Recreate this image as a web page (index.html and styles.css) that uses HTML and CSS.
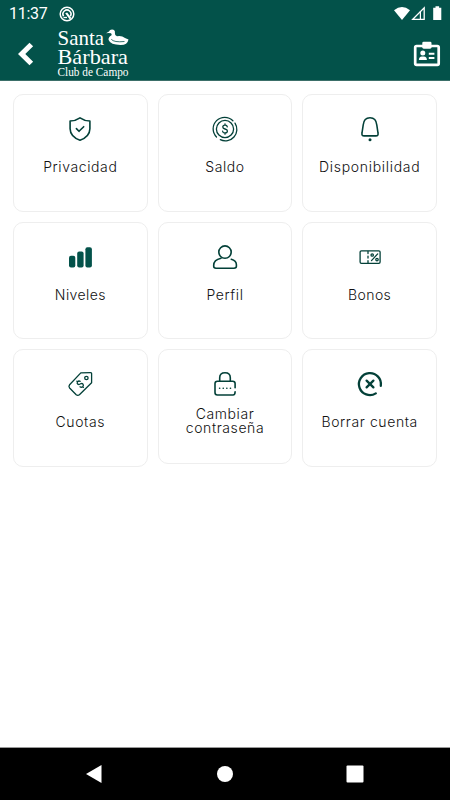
FILE: index.html
```html
<!DOCTYPE html>
<html lang="es">
<head>
  <meta charset="UTF-8" />
  <meta name="viewport" content="width=device-width, initial-scale=1" />
  <title>Santa Bárbara Club de Campo</title>
  <link rel="stylesheet" href="styles.css">
</head>
<body>
  <header>
    <div class="status-bar">
      <span class="clock">11:37</span>
      <svg class="status-app" width="16" height="16" viewBox="0 0 16 16">
        <circle cx="8" cy="8" r="6.8" fill="none" stroke="#fff" stroke-width="1.5" />
        <path d="M4.6 10.2A4 4 0 1 1 11.3 10.2" fill="none" stroke="#fff" stroke-width="1.6" />
        <path d="M6.2 7.2L8.2 6.5L12.5 12.2L10.6 13.2Z" fill="#fff" />
        <path d="M4.5 11.5h3.5" stroke="#fff" stroke-width="1.3" />
      </svg>
      <svg class="status-icons" width="50" height="16" viewBox="0 0 50 16">
        <path d="M0 4.2Q8 -2.2 16 4.2L8 14Z" fill="#fff" />
        <path d="M18.8 13.3L30.2 1.8V13.3Z" fill="none" stroke="#fff" stroke-width="1.3" />
        <path d="M26.4 5.3V13" stroke="#fff" stroke-width="1.2" />
        <path d="M39.2 1.8h2.3V.3h3.6v1.5h2.2V14h-8.1Z" fill="#fff" />
      </svg>
    </div>

    <div class="nav-bar">
      <svg class="back" width="16" height="24" viewBox="0 0 16 24">
        <path d="M13.3 2.5L3.7 12L13.3 21.5" fill="none" stroke="#fff" stroke-width="5.2" />
      </svg>
      <svg class="logo" width="74" height="52" viewBox="0 0 74 52">
        <text x="0.5" y="18" font-size="21" textLength="46.5" lengthAdjust="spacingAndGlyphs">Santa</text>
        <text x="0.5" y="37.3" font-size="21.5" textLength="70.5" lengthAdjust="spacingAndGlyphs">Bárbara</text>
        <text x="0.5" y="49" font-size="11.5" textLength="71" lengthAdjust="spacingAndGlyphs">Club de Campo</text>
        <path d="M49 6.2L52 4.6Q52.6 2.4 55 2.4Q58.4 2.6 57.9 6Q57.6 8.6 60 9.3Q64.5 8.3 68 11L71.5 12.4Q70.5 18 63.5 17.9Q53.5 17.9 51.6 13Q51 10.2 54.5 8.2Q55 7.2 54 6.3Q51.5 5.7 49 6.2Z" />
        <path class="wing" d="M54.3 12.3Q57 15.6 67.5 14.5" />
      </svg>
      <svg class="card-icon" width="28" height="26" viewBox="0 0 28 26">
        <rect x="2.2" y="5" width="23.5" height="18.8" rx="1.4" fill="none" stroke="#fff" stroke-width="2.7" />
        <rect x="9.3" y=".7" width="9.2" height="7" rx="1.4" fill="#fff" />
        <circle cx="9.8" cy="11.9" r="2.5" fill="#fff" />
        <path d="M5.9 19q0-3.5 3-3.5h2q3 0 3 3.5Z" fill="#fff" />
        <path d="M15.8 12.7h5.6M15.8 17h5.6" stroke="#fff" stroke-width="2" />
      </svg>
    </div>
  </header>

  <main class="menu">
    <div class="card">
      <svg class="icon" viewBox="0 0 28 28">
        <path d="M14 2.8Q9.3 6 4.1 6V13.8Q4.3 21.8 14 25.3Q23.7 21.8 23.9 13.8V6Q18.7 6 14 2.8Z" />
        <path d="M10.4 13.6L13 16.3L17.7 11.7" />
      </svg>
      <span class="label">Privacidad</span>
    </div>
    <div class="card">
      <svg class="icon fine" viewBox="0 0 28 28">
        <path d="M5.5 22A11.5 11.5 0 0 1 21.9 5.7M24 8.1A11.5 11.5 0 0 1 9.3 24.7" />
        <circle cx="14" cy="14" r="8.6" />
        <path d="M14 8.8V10M14 18V19.2M16.3 11.9Q16.1 10.1 14 10.1Q11.8 10.1 11.8 12Q11.8 13.5 14 14Q16.4 14.5 16.4 16.1Q16.4 18 14 18Q11.8 18 11.6 16.2" />
      </svg>
      <span class="label">Saldo</span>
    </div>
    <div class="card">
      <svg class="icon" viewBox="0 0 28 28">
        <path d="M14 2.8Q20.1 2.8 20.8 10L22 18Q22.6 20.9 19.8 20.9H8.2Q5.4 20.9 6 18L7.2 10Q7.9 2.8 14 2.8Z" />
        <circle class="solid" cx="14" cy="24.8" r="1.5" />
      </svg>
      <span class="label wide">Disponibilidad</span>
    </div>

    <div class="card lower">
      <svg class="icon bars" viewBox="0 0 28 28">
        <rect x="3" y="10.8" width="6.3" height="11.6" rx="2" />
        <rect x="11.2" y="6.6" width="6.4" height="15.8" rx="2" />
        <rect x="19.4" y="2.3" width="6.5" height="20.1" rx="2" />
      </svg>
      <span class="label tight">Niveles</span>
    </div>
    <div class="card lower">
      <svg class="icon" viewBox="0 0 28 28">
        <circle cx="14" cy="7.1" r="6.2" />
        <path d="M10 13.2Q2.7 14.8 2.7 20.3V21.3Q2.7 23.2 5 23.2H23Q25.4 23.2 25.4 21.3V19.7Q25.3 15.4 20.3 14.2" />
      </svg>
      <span class="label">Perfil</span>
    </div>
    <div class="card lower">
      <svg class="icon fine" viewBox="0 0 28 28">
        <rect x="4.1" y="5.8" width="20" height="12.6" rx="1.3" />
        <path d="M12 6.5V18.2" stroke-dasharray="2 2.6" />
        <path d="M21.7 8.9L15.5 15.6" />
        <circle cx="16.2" cy="10" r="1.2" />
        <circle cx="21" cy="14.6" r="1.2" />
      </svg>
      <span class="label tight">Bonos</span>
    </div>

    <div class="card">
      <svg class="icon fine" viewBox="0 0 28 28">
        <path d="M14.8 2.9L24.5 2.7Q25.8 2.7 25.6 4V12.8L13.4 24.8Q11.8 26 10.2 24.8L3.6 18Q2.3 16.3 3.6 14.8Z" />
        <circle cx="20.4" cy="8" r="1.7" />
        <path d="M14.2 11.3Q12.6 10.5 11.5 11.8Q10.6 13.2 11.8 14.2Q13.2 14.9 14.6 13.8Q16 13 17 14.2Q17.9 15.6 16.7 16.7Q15.3 17.8 14 16.8M11.5 11.8L10.8 11.1M16.7 16.7L17.4 17.4" />
      </svg>
      <span class="label">Cuotas</span>
    </div>
    <div class="card two-lines">
      <svg class="icon" viewBox="0 0 28 28">
        <path d="M8.7 11V7.8Q8.7 2.8 14 2.8Q19.3 2.8 19.3 7.8V11" />
        <path d="M24.1 17.8V13.5Q24.1 11.2 21.7 11.2H6.4Q4 11.2 4 13.5V22.5Q4 25 6.4 25H22Q24.1 25 24.1 21.7" />
        <path d="M8.6 18.2h.1M12.2 18.2h.1M15.8 18.2h.1M19.4 18.2h.1" />
      </svg>
      <span class="label">Cambiar<br />contraseña</span>
    </div>
    <div class="card">
      <svg class="icon bold" viewBox="0 0 28 28">
        <path d="M24.8 15.8A11 11 0 1 0 19.8 23.4" />
        <path d="M10.6 10.6L17.4 17.4M17.4 10.6L10.6 17.4" />
      </svg>
      <span class="label">Borrar cuenta</span>
    </div>
  </main>

  <footer>
    <svg width="18" height="20" viewBox="0 0 18 20"><path d="M1 10L16.5 1V19Z" /></svg>
    <svg width="18" height="20" viewBox="0 0 18 20"><circle cx="9" cy="10" r="8" /></svg>
    <svg width="18" height="20" viewBox="0 0 18 20"><rect x=".5" y="1.5" width="17" height="17" rx="1" /></svg>
  </footer>
</body>
</html>
```

FILE: styles.css
```css
* {
  margin: 0;
  padding: 0;
  box-sizing: border-box;
}

body {
  background-color: #ffffff;
  font-family: Inter, "Liberation Sans", sans-serif;
  display: flex;
  flex-direction: column;
  height: 800px;
}

svg {
  display: block;
  flex-shrink: 0;
}

/* Green header: status bar + navigation */
header {
  height: 81px;
  background-color: #03524a;
  border-bottom: 1px solid #3b6f69;
}

.status-bar {
  display: flex;
  align-items: center;
  height: 27px;
  padding: 0 2px 0 9px;
  color: #ffffff;
}

.clock {
  font-family: Roboto, sans-serif;
  font-size: 16px;
  letter-spacing: -0.3px;
  line-height: 28px;
  width: 50px;
  white-space: nowrap;
}

.status-icons {
  margin-left: auto;
  margin-right: 4px;
}

.nav-bar {
  display: flex;
  height: 53px;
  padding: 0 9px 0 18px;
}

.back {
  margin-top: 15px;
}

.logo {
  margin-left: 23px;
  font-family: "Liberation Serif", serif;
  fill: #ffffff;
}

.logo .wing {
  fill: none;
  stroke: #03524a;
  stroke-width: 0.8;
}

.card-icon {
  margin: 14px 0 0 auto;
}

/* Menu grid */
.menu {
  flex: 1;
  display: grid;
  grid-template-columns: repeat(3, 1fr);
  grid-auto-rows: 117.5px;
  gap: 10px;
  align-content: start;
  padding: 13px 13px 0;
}

.card {
  display: flex;
  flex-direction: column;
  align-items: center;
  padding-top: 20px;
  border: 1px solid #eeeeee;
  border-radius: 10px;
}

.two-lines {
  height: 114.5px;
}

.icon {
  width: 28px;
  height: 28px;
  margin-bottom: 17px;
  fill: none;
  stroke: #034038;
  stroke-width: 1.6;
  stroke-linecap: round;
  stroke-linejoin: round;
}

.icon.fine {
  stroke-width: 1.3;
}

.icon.bold {
  stroke-width: 2.3;
}

.icon.bars {
  fill: #03524a;
  stroke: none;
}

.icon .solid {
  fill: #034038;
  stroke: none;
}

.label {
  font-size: 14px;
  font-weight: 300;
  line-height: 14px;
  letter-spacing: 0.6px;
  color: #111111;
  text-align: center;
  white-space: nowrap;
}

.label.tight {
  letter-spacing: 0.4px;
}

.label.wide {
  letter-spacing: 0.7px;
}

/* middle row sits a little lower */
.lower {
  padding-top: 22px;
}

.lower .icon {
  margin-bottom: 15px;
}

.two-lines .icon {
  margin-bottom: 9px;
}

/* Android navigation buttons */
footer {
  height: 53px;
  display: flex;
  justify-content: space-between;
  align-items: center;
  padding: 0 86px 0 85px;
  background-color: #000000;
  border-top: 1px solid #999999;
}

footer svg {
  fill: #ffffff;
}
```
